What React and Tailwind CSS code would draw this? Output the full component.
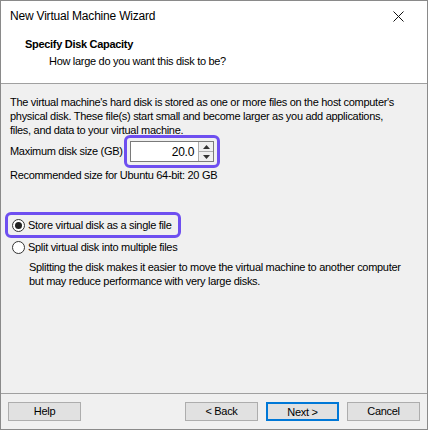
export default function App() {
  return (
    <div
      className="w-[428px] h-[430px] flex flex-col border border-[#8a8a8a] bg-[#f0f0f0] text-[11px] tracking-[-0.3px] text-black overflow-hidden whitespace-nowrap"
      style={{ fontFamily: '"Liberation Sans", Arial, sans-serif' }}
    >
      <div className="bg-white flex flex-col border-b border-[#a0a0a0]">
        <div className="h-[30px] flex items-center justify-between pl-[9px] pr-[23px]">
          <span className="text-[12px] tracking-[-0.2px]">New Virtual Machine Wizard</span>
          <svg width="11" height="11" viewBox="0 0 11 11">
            <path d="M0.5 0.5 L10.5 10.5 M10.5 0.5 L0.5 10.5" stroke="#111" strokeWidth="1" />
          </svg>
        </div>
        <div className="pl-[24px] pt-[6px] pb-[15px] flex flex-col gap-[3px] leading-[14px]">
          <span className="font-bold">Specify Disk Capacity</span>
          <span className="pl-[24px]">How large do you want this disk to be?</span>
        </div>
      </div>

      <div className="flex-1 flex flex-col px-[9px] pt-[11px]">
        <p className="leading-[14px]">
          The virtual machine's hard disk is stored as one or more files on the host computer's
          <br />
          physical disk. These file(s) start small and become larger as you add applications,
          <br />
          files, and data to your virtual machine.
        </p>

        <div className="flex items-center -mt-[2px]">
          <span className="w-[114px]">Maximum disk size (GB)</span>
          <div className="p-[3px] border-[3px] border-[#6e4ff0] rounded-[6px]">
            <div className="flex items-center w-[84px] h-[21px] bg-white border border-[#7a7a7a]">
              <span className="flex-1 text-right pr-[4px] text-[12px]">20.0</span>
              <div className="flex flex-col w-[15px] h-full border-l border-[#adadad]">
                <div className="flex-1 flex items-center justify-center bg-[#f0f0f0] border-b border-[#adadad]">
                  <svg width="7" height="4" viewBox="0 0 7 4"><path d="M3.5 0 L7 4 L0 4 Z" fill="#333" /></svg>
                </div>
                <div className="flex-1 flex items-center justify-center bg-[#f0f0f0]">
                  <svg width="7" height="4" viewBox="0 0 7 4"><path d="M0 0 L7 0 L3.5 4 Z" fill="#333" /></svg>
                </div>
              </div>
            </div>
          </div>
        </div>

        <p className="leading-[14px]">Recommended size for Ubuntu 64-bit: 20 GB</p>

        <div className="mt-[30px] flex flex-col items-start -ml-[5px]">
          <div className="flex items-center gap-[3px] pl-[4px] pr-[6px] h-[26px] border-[3px] border-[#6e4ff0] rounded-[6px]">
            <span className="w-[13px] h-[13px] rounded-full border border-[#333] bg-white flex items-center justify-center">
              <span className="w-[7px] h-[7px] rounded-full bg-[#222]" />
            </span>
            <span>Store virtual disk as a single file</span>
          </div>
          <div className="flex items-center gap-[3px] pl-[7px] mt-[2px] h-[14px]">
            <span className="w-[13px] h-[13px] rounded-full border border-[#333] bg-white" />
            <span>Split virtual disk into multiple files</span>
          </div>
          <p className="pl-[24px] mt-[6px] leading-[14px]">
            Splitting the disk makes it easier to move the virtual machine to another computer
            <br />
            but may reduce performance with very large disks.
          </p>
        </div>
      </div>

      <div className="border-t border-[#a0a0a0] h-[36px] flex items-center px-[7px]">
        <button className="w-[73px] h-[19px] bg-[#e1e1e1] border border-[#adadad]">Help</button>
        <div className="flex-1" />
        <button className="w-[73px] h-[19px] bg-[#e1e1e1] border border-[#adadad]">&lt; Back</button>
        <button className="ml-[8px] w-[73px] h-[19px] bg-[#e1e1e1] border-2 border-[#0078d7]">Next &gt;</button>
        <button className="ml-[8px] w-[73px] h-[19px] bg-[#e1e1e1] border border-[#adadad]">Cancel</button>
      </div>
    </div>
  )
}
